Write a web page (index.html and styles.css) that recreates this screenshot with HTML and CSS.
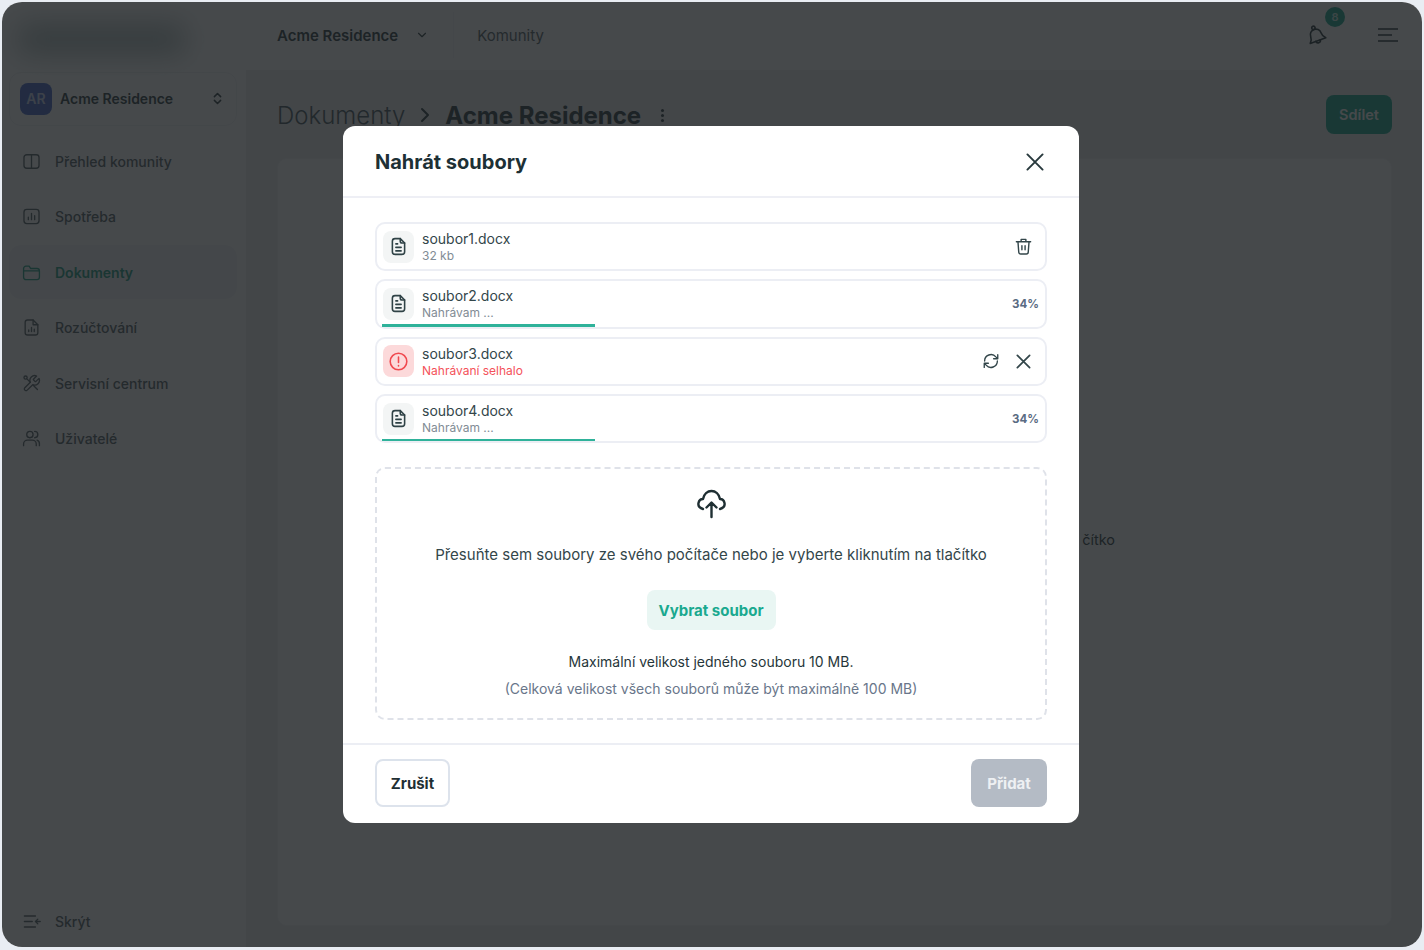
FILE: index.html
```html
<!DOCTYPE html>
<html lang="cs">
<head>
    <meta charset="UTF-8">
    <meta name="viewport" content="width=device-width, initial-scale=1.0">
    <title>Nahrát soubory</title>
    <link rel="stylesheet" href="styles.css">
</head>
<body>
    <svg class="defs" width="0" height="0">
        <symbol id="i-doc" viewBox="0 0 24 24">
            <path d="M14 3H8a3 3 0 0 0-3 3v12a3 3 0 0 0 3 3h8a3 3 0 0 0 3-3V8z"/>
            <path d="M14 3v3a2 2 0 0 0 2 2h3M9 9h2M9 13h6M9 17h6"/>
        </symbol>
        <symbol id="i-x" viewBox="0 0 24 24">
            <path d="M5 5l14 14M19 5L5 19"/>
        </symbol>
    </svg>

    <div class="frame">
        <aside class="sidebar">
            <div class="logo-area"><div class="logo-blur"></div></div>
            <div class="switcher">
                <span class="avatar">AR</span>
                <span class="switcher-name">Acme Residence</span>
                <svg class="ico-sm" viewBox="0 0 24 24"><path d="M7 9l5-5 5 5M7 15l5 5 5-5"/></svg>
            </div>
            <nav class="nav">
                <a class="nav-item">
                    <svg class="ico" viewBox="0 0 24 24"><rect x="2.5" y="3.5" width="19" height="17" rx="3.5"/><path d="M12 3.5v17"/></svg>
                    Přehled komunity
                </a>
                <a class="nav-item">
                    <svg class="ico" viewBox="0 0 24 24"><rect x="2.5" y="3" width="19" height="18" rx="3.5"/><path d="M8 16v-3M12 16V8M16 16v-5"/></svg>
                    Spotřeba
                </a>
                <a class="nav-item active">
                    <svg class="ico" viewBox="0 0 24 24"><path d="M2 7a3 3 0 0 1 3-3h4l2 3h8a3 3 0 0 1 3 3v8a3 3 0 0 1-3 3H5a3 3 0 0 1-3-3z"/><path d="M2 10h20"/></svg>
                    Dokumenty
                </a>
                <a class="nav-item">
                    <svg class="ico" viewBox="0 0 24 24"><path d="M14 2.500H7a3 3 0 0 0-3 3v13a3 3 0 0 0 3 3h10a3 3 0 0 0 3-3V8.500z"/><path d="M14 2.500v6h6M8.500 17v-2M12 17v-5M15.500 17v-3"/></svg>
                    Rozúčtování
                </a>
                <a class="nav-item">
                    <svg class="ico" viewBox="0 0 24 24"><path d="M14.700 6.300a1 1 0 0 0 0 1.400l1.600 1.600a1 1 0 0 0 1.400 0l3.770-3.770a6 6 0 0 1-7.940 7.940l-6.910 6.910a2.120 2.120 0 0 1-3-3l6.910-6.910a6 6 0 0 1 7.940-7.940z"/><circle cx="4.500" cy="4.500" r="2"/><path d="M6.500 6.500l4 4M14.500 14.500l5 5"/></svg>
                    Servisní centrum
                </a>
                <a class="nav-item">
                    <svg class="ico" viewBox="0 0 24 24"><circle cx="10" cy="7" r="4"/><path d="M2 21v-2a5 5 0 0 1 5-5h6a5 5 0 0 1 5 5v2M16 3a4 4 0 0 1 0 8M19 14a5 5 0 0 1 3 5v2"/></svg>
                    Uživatelé
                </a>
            </nav>
            <a class="nav-item hide-item">
                <svg class="ico" viewBox="0 0 24 24"><path d="M3 5h14M3 12h10M3 19h14M23 12h-6M20 9l-3 3 3 3"/></svg>
                Skrýt
            </a>
        </aside>

        <div class="content">
            <header class="topbar">
                <div class="community">
                    <span class="community-name">Acme Residence</span>
                    <svg class="ico-sm" viewBox="0 0 24 24"><path d="M6 9l6 6 6-6"/></svg>
                </div>
                <span class="topbar-link">Komunity</span>
                <div class="bell">
                    <svg class="ico-bell" viewBox="0 0 24 24"><path d="M12 5.500a6 6 0 0 0-6 6c0 4-1.500 5.500-3 7h18c-1.500-1.500-3-3-3-7a6 6 0 0 0-6-6z"/><circle cx="12" cy="3.700" r="1.800"/><path d="M9.500 18.500a2.500 2.500 0 0 0 5 0"/></svg>
                    <span class="badge">8</span>
                </div>
                <svg class="ico-menu" viewBox="0 0 20 14"><path d="M0 1h20M0 7h14M0 13h20"/></svg>
            </header>
            <main class="main">
                <div class="page-head">
                    <span class="crumb">Dokumenty</span>
                    <svg class="crumb-sep" viewBox="0 0 24 24"><path d="M8 4l8 8-8 8"/></svg>
                    <span class="crumb-current">Acme Residence</span>
                    <span class="dots"><i></i><i></i><i></i></span>
                    <button class="share">Sdílet</button>
                </div>
                <section class="card">
                    <p class="empty">čítko</p>
                </section>
            </main>
        </div>

        <div class="overlay">
            <div class="modal">
                <div class="modal-head">
                    <h2>Nahrát soubory</h2>
                    <svg class="ico-close"><use href="#i-x"/></svg>
                </div>
                <div class="modal-body">
                    <ul class="files">
                        <li class="file">
                            <span class="file-icon"><svg><use href="#i-doc"/></svg></span>
                            <div class="file-text"><div class="file-name">soubor1.docx</div><div class="file-sub">32 kb</div></div>
                            <svg class="file-action" viewBox="0 0 24 24"><path d="M3 6h18M9 5V3h6v2M5 6l1 13a2.500 2.500 0 0 0 2.500 2.500h7A2.500 2.500 0 0 0 18 19l1-13M10 11v5M14 11v5"/></svg>
                        </li>
                        <li class="file">
                            <span class="file-icon"><svg><use href="#i-doc"/></svg></span>
                            <div class="file-text"><div class="file-name">soubor2.docx</div><div class="file-sub">Nahrávam ...</div></div>
                            <span class="percent">34%</span>
                            <span class="progress"></span>
                        </li>
                        <li class="file">
                            <span class="file-icon error"><svg viewBox="0 0 24 24"><circle cx="12" cy="12" r="9.500"/><path d="M12 7v6M12 16.500v.5"/></svg></span>
                            <div class="file-text"><div class="file-name">soubor3.docx</div><div class="file-sub failed">Nahrávaní selhalo</div></div>
                            <svg class="file-action sync" viewBox="0 0 24 24"><path d="M3.500 12a8.500 8.500 0 0 1 15-5.500L21 9M21 3.500V9h-5.500M20.500 12a8.500 8.500 0 0 1-15 5.500L3 15M3 20.500V15h5.500"/></svg>
                            <svg class="file-action x"><use href="#i-x"/></svg>
                        </li>
                        <li class="file">
                            <span class="file-icon"><svg><use href="#i-doc"/></svg></span>
                            <div class="file-text"><div class="file-name">soubor4.docx</div><div class="file-sub">Nahrávam ...</div></div>
                            <span class="percent">34%</span>
                            <span class="progress"></span>
                        </li>
                    </ul>
                    <div class="dropzone">
                        <svg class="ico-cloud" viewBox="0 0 29 30"><path d="M6 20C2.500 19 1 16.500 1.500 14 2 11.500 4 10 6 10 7 5 10.500 2 14.500 2S22 5 23 10c2 0 4 1.500 4.500 4S26.500 19 23 20"/><path d="M14.500 28V14M9.500 18.500l5-5 5 5"/></svg>
                        <p class="drop-title">Přesuňte sem soubory ze svého počítače nebo je vyberte kliknutím na tlačítko</p>
                        <button class="pick">Vybrat soubor</button>
                        <p class="limit">Maximální velikost jedného souboru 10 MB.</p>
                        <p class="limit-total">(Celková velikost všech souborů může být maximálně 100 MB)</p>
                    </div>
                </div>
                <div class="modal-foot">
                    <button class="btn-cancel">Zrušit</button>
                    <button class="btn-add">Přidat</button>
                </div>
            </div>
        </div>
    </div>
</body>
</html>
```

FILE: styles.css
```css
* {
    box-sizing: border-box;
}
html, body {
    height: 100%;
}
body {
    margin: 0;
    padding: 2px 2px 3px 2px;
    background: #e9edf3;
    font-family: Inter, "Noto Sans", sans-serif;
    color: #1f2f33;
}
svg {
    fill: none;
    stroke: currentColor;
    stroke-width: 2;
    stroke-linecap: round;
    stroke-linejoin: round;
    flex: none;
}
.defs {
    position: absolute;
}
p {
    margin: 0;
}
button {
    font-family: inherit;
    border: none;
}
.frame {
    position: relative;
    display: flex;
    height: 100%;
    background: #fff;
    border-radius: 20px;
    overflow: hidden;
}

/* sidebar */
.sidebar {
    width: 244px;
    flex: none;
    display: flex;
    flex-direction: column;
    padding: 0 9px 0 7px;
    background: #fff;
}
.logo-area {
    height: 70px;
    padding: 22px 10px 0;
    flex: none;
}
.logo-blur {
    width: 165px;
    height: 30px;
    background: #a8b8b8;
    filter: blur(14px);
}
.switcher {
    display: flex;
    align-items: center;
    height: 54px;
    padding: 0 10px 1px;
    border: 1px solid #f0f1f3;
    border-radius: 12px;
    font-size: 14px;
    font-weight: 600;
    color: #26363a;
}
.avatar {
    width: 32px;
    height: 32px;
    border-radius: 8px;
    background: #3f63c9;
    color: #c9d6f5;
    display: flex;
    align-items: center;
    justify-content: center;
    font-size: 14px;
    font-weight: 600;
    margin-right: 8px;
}
.switcher-name {
    flex: 1;
}
.switcher .ico-sm {
    width: 15px;
    height: 15px;
    margin-right: 1px;
    stroke-width: 2.400;
}
.ico-sm {
    width: 14px;
    height: 14px;
    color: #26363a;
}
.nav {
    flex: 1;
    display: flex;
    flex-direction: column;
    gap: 1.4px;
    margin-top: 8.5px;
}
.nav-item {
    display: flex;
    align-items: center;
    gap: 14px;
    height: 54px;
    padding-left: 13px;
    border-radius: 12px;
    font-size: 14px;
    font-weight: 500;
    color: #4e5a5f;
}
.nav-item.active {
    background: #f3f5f7;
    color: #169a80;
    font-weight: 600;
}
.hide-item {
    flex: none;
    padding-top: 2px;
}
.ico {
    width: 19px;
    height: 19px;
    stroke-width: 1.7;
}

/* content */
.content {
    flex: 1;
    min-width: 0;
    display: flex;
    flex-direction: column;
}
.topbar {
    height: 68px;
    flex: none;
    display: flex;
    align-items: center;
    padding: 0 24px 2px 31px;
    font-size: 15px;
    background: #fff;
}
.community {
    display: flex;
    align-items: center;
    gap: 17px;
    padding-right: 24px;
    font-weight: 600;
    color: #26363a;
    height: 46px;
    border-right: 1px solid #f4f5f6;
}
.topbar-link {
    flex: 1;
    margin-left: 23px;
    color: #4e5a5f;
}
.bell {
    position: relative;
    width: 22px;
    height: 22px;
    margin-right: 51px;
}
.ico-bell {
    width: 22px;
    height: 22px;
    stroke-width: 1.800;
    color: #1f2f33;
    transform: rotate(-20deg);
}
.badge {
    position: absolute;
    top: -17px;
    left: 20px;
    width: 20px;
    height: 20px;
    border-radius: 50%;
    background: #10a58b;
    color: #c9ece5;
    font-size: 11px;
    font-weight: 600;
    display: flex;
    align-items: center;
    justify-content: center;
}
.ico-menu {
    width: 20px;
    height: 14px;
    color: #1f2f33;
    stroke-width: 1.700;
    stroke-linecap: butt;
}
.main {
    flex: 1;
    min-height: 0;
    display: flex;
    flex-direction: column;
    padding: 0 30px 21px 31px;
    background: #ecedf0;
}
.page-head {
    display: flex;
    align-items: center;
    height: 88px;
    flex: none;
    padding-top: 2px;
    font-size: 24px;
}
.crumb {
    font-weight: 300;
    color: #43535a;
}
.crumb-sep {
    width: 18px;
    height: 18px;
    margin: 0 11px;
    stroke-width: 2.700;
    color: #26363a;
}
.crumb-current {
    font-weight: 700;
    color: #26363a;
}
.dots {
    display: flex;
    flex-direction: column;
    gap: 2px;
    margin-left: 20px;
    flex: 1;
}
.dots i {
    width: 3px;
    height: 3px;
    border-radius: 50%;
    background: #26363a;
}
.share {
    width: 66px;
    height: 39px;
    margin-top: -2px;
    border-radius: 8px;
    background: #10a58b;
    color: #fff;
    font-size: 14.500px;
    font-weight: 600;
}
.card {
    flex: 1;
    background: #fff;
    border: 1px solid #f3f4f5;
    border-radius: 10px;
    display: flex;
    align-items: center;
    justify-content: flex-end;
    padding: 0 276px 6px 0;
}
.empty {
    font-size: 14.500px;
    color: #26363a;
}

/* modal */
.overlay {
    position: absolute;
    inset: 0;
    padding-right: 2px;
    background: rgba(27, 31, 33, 0.81);
    display: flex;
    align-items: center;
    justify-content: center;
}
.modal {
    width: 736px;
    height: 697px;
    background: #fff;
    border-radius: 12px;
    display: flex;
    flex-direction: column;
}
.modal-head {
    height: 72px;
    flex: none;
    display: flex;
    align-items: center;
    justify-content: space-between;
    padding: 2px 31px 0 32px;
    border-bottom: 2px solid #eeeff5;
}
.modal-head h2 {
    margin: 0;
    font-size: 20px;
    font-weight: 700;
    color: #1d3035;
}
.ico-close {
    width: 26px;
    height: 26px;
    color: #28393d;
    stroke-width: 1.800;
}
.modal-body {
    flex: 1;
    display: flex;
    flex-direction: column;
    gap: 24px;
    padding: 24px 32px 23px;
}
.files {
    list-style: none;
    margin: 0;
    padding: 0;
    display: flex;
    flex-direction: column;
    gap: 8px;
}
.file {
    position: relative;
    height: 49.330px;
    display: flex;
    align-items: center;
    padding: 0 6px 0 8px;
    border: 2px solid #eceef4;
    border-radius: 10px;
}
.file-icon {
    width: 31px;
    height: 32px;
    flex: none;
    margin-left: -2px;
    margin-right: 8px;
    border-radius: 8px;
    background: #f3f5f5;
    color: #2f4246;
    display: flex;
    align-items: center;
    justify-content: center;
}
.file-icon svg {
    width: 21px;
    height: 21px;
    stroke-width: 1.800;
}
.file-icon.error {
    background: #fcd9da;
    color: #f0494f;
}
.file-text {
    flex: 1;
    min-width: 0;
    padding-top: 1px;
}
.file-name {
    font-size: 14px;
    line-height: 18px;
    color: #33464a;
}
.file-sub {
    font-size: 12px;
    line-height: 16px;
    color: #828c95;
}
.file-sub.failed {
    color: #f4525a;
}
.file-action {
    width: 19px;
    height: 19px;
    color: #33464a;
    stroke-width: 1.800;
    margin-right: 6px;
}
.file-action.sync {
    width: 18px;
    height: 18px;
    margin-right: 0;
}
.file-action.x {
    width: 21px;
    height: 21px;
    margin-left: 13px;
    margin-right: 5px;
    stroke-width: 2;
}
.percent {
    font-size: 11.500px;
    font-weight: 700;
    color: #5a6b82;
}
.progress {
    position: absolute;
    left: 5px;
    bottom: 0;
    width: 213px;
    height: 2.500px;
    background: #2fb29a;
}
.dropzone {
    flex: 1;
    display: flex;
    flex-direction: column;
    align-items: center;
    border: 2px dashed #dfe2e9;
    border-radius: 10px;
    padding-top: 20px;
}
.ico-cloud {
    width: 29px;
    height: 30px;
    color: #1f2f33;
    stroke-width: 2.400;
}
.drop-title {
    margin-top: 25px;
    font-size: 15px;
    line-height: 22px;
    color: #33464a;
}
.pick {
    margin-top: 24px;
    width: 129px;
    height: 40px;
    border-radius: 8px;
    background: #e9f6f3;
    color: #1aa98f;
    font-size: 15px;
    font-weight: 700;
}
.limit {
    margin-top: 22px;
    font-size: 14px;
    line-height: 20px;
    color: #26363a;
}
.limit-total {
    margin-top: 7px;
    font-size: 14px;
    line-height: 20px;
    color: #69768a;
}
.modal-foot {
    height: 80px;
    flex: none;
    display: flex;
    align-items: center;
    justify-content: space-between;
    padding: 0 32px 2px;
    border-top: 2px solid #eceef4;
}
.btn-cancel,
.btn-add {
    height: 48px;
    border-radius: 8px;
    font-size: 15px;
    font-weight: 700;
}
.btn-cancel {
    width: 75px;
    background: #fff;
    border: 2px solid #dde3ec;
    color: #1f2f33;
}
.btn-add {
    width: 76px;
    background: #b4bbc5;
    color: #eef0f3;
}
```
